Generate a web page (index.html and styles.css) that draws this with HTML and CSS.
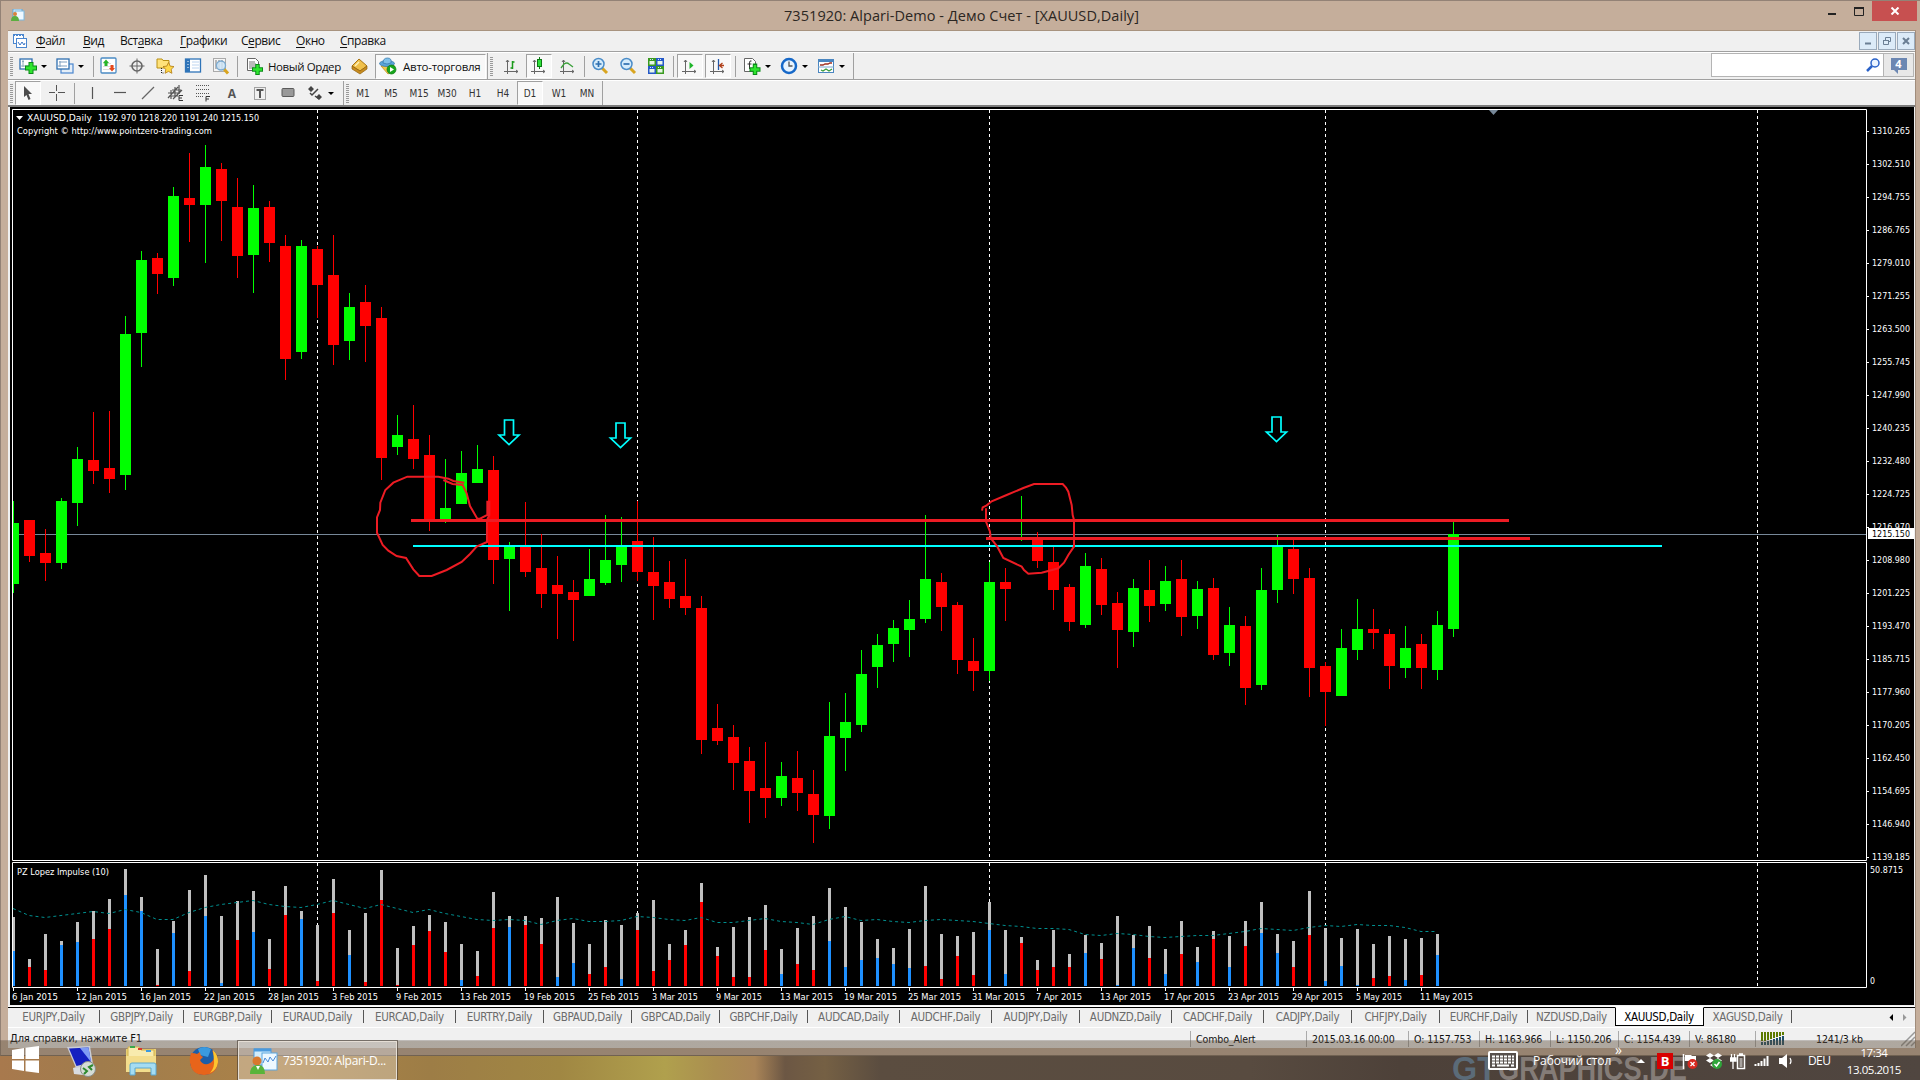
FILE: index.html
```html
<!DOCTYPE html>
<html lang="ru">
<head>
  <meta charset="UTF-8" />
  <title>7351920: Alpari-Demo - Демо Счет - [XAUUSD,Daily]</title>
  <link rel="stylesheet" href="styles.css">
</head>
<body>
  <div class="screen">
    <div class="window">
      <div class="titlebar">
        <svg class="app-icon" width="14" height="13" viewBox="0 0 14 13"><rect x="2" y="0" width="9" height="8" fill="#dff0fb" stroke="#5fa5d8"/><rect x="4" y="2" width="9" height="9" fill="#eef8ff" stroke="#7ab8e0"/><circle cx="4" cy="5" r="2" fill="#d9823a"/><path d="M0 12q0-5 4-5t4 5z" fill="#5cae3f"/></svg>
        <div class="title">7351920: Alpari-Demo - Демо Счет - [XAUUSD,Daily]</div>
        <div class="win-controls">
          <svg width="45" height="20" viewBox="0 0 45 20"><path d="M1 13h8" stroke="#222" stroke-width="2"/><path d="M27.500 7v7.500h9V7z" fill="none" stroke="#222"/><path d="M27 7h10" stroke="#222" stroke-width="2"/></svg>
          <div class="close"><svg width="10" height="8" viewBox="0 0 10 8"><path d="M1.500 .5l7 7M8.500 .5l-7 7" stroke="#fff" stroke-width="2"/></svg></div>
        </div>
      </div>

      <div class="client">
        <div class="menubar">
          <svg class="menu-icon" width="16" height="16" viewBox="0 0 16 16"><rect x="1.500" y="1.500" width="10" height="9" fill="#fff" stroke="#4a86cf"/><path d="M1 2h11" stroke="#4a86cf" stroke-width="2" stroke-dasharray="2 1"/><rect x="4.500" y="5.500" width="10" height="9" fill="#fff" stroke="#4a86cf"/><path d="M6 9l2 3 2-3 2 3 1-2" fill="none" stroke="#3a76c8"/></svg>
          <div class="menu">
            <span><u>Ф</u>айл</span><span><u>В</u>ид</span><span>Вст<u>а</u>вка</span><span><u>Г</u>рафики</span><span>С<u>е</u>рвис</span><span><u>О</u>кно</span><span><u>С</u>правка</span>
          </div>
          <div class="mdi">
            <b><svg width="8" height="8"><path d="M1 6.500h6" stroke="#6b7f94" stroke-width="2"/></svg></b>
            <b><svg width="8" height="8"><path d="M2.500 3V.5h5v4H6M.5 3.500h5v4h-5zM0 3.500h6" fill="none" stroke="#6b7f94"/></svg></b>
            <b><svg width="8" height="8"><path d="M1 1l6 6M7 1L1 7" stroke="#6b7f94" stroke-width="2"/></svg></b>
          </div>
        </div>

        <div class="toolbar">
          <div class="strip">
            <i class="grip"></i>
            <div class="drop"><svg width="18" height="18" viewBox="0 0 18 18"><rect x="1" y="2" width="12" height="10" fill="#fff" stroke="#2f6fb0" stroke-width="1.300"/><path d="M4 3v7M2 9h9M3 5l1-1 1 1" fill="none" stroke="#8ab" /><path d="M12 5v12M6 11h12" stroke="#0a8a18" stroke-width="5"/><path d="M12 6v10M7 11h10" stroke="#2ee52e" stroke-width="3"/></svg><em></em></div>
            <div class="drop"><svg width="18" height="18" viewBox="0 0 18 18"><rect x="5" y="7" width="12" height="9" fill="#e4eef8" stroke="#4a86cf" stroke-width="1.200"/><rect x="1" y="2" width="12" height="10" fill="#fff" stroke="#2f6fb0" stroke-width="1.300"/><path d="M4 4v6M2 9h9M3 5h8" stroke="#7f9fbf"/></svg><em></em></div>
            <i class="sep s4"></i>
            <div class="btn"><svg width="18" height="18" viewBox="0 0 18 18"><rect x="1" y="1" width="15" height="15" rx="1" fill="#fff" stroke="#4a8ac4" stroke-width="1.300"/><path d="M3 6.500h8M3 9.500h11M3 12.500h11" stroke="#ddd"/><path d="M6 2.500l3 3.500H7.500v3h-3V6H3z" fill="#26b52a"/><path d="M12 14.500L9 11h1.500V8h3v3H15z" fill="#e5481c"/></svg></div>
            <div class="btn"><svg width="18" height="18" viewBox="0 0 18 18"><circle cx="9" cy="9" r="5" fill="none" stroke="#666" stroke-width="1.600"/><path d="M9 1.500v15M1.500 9h15" stroke="#666"/></svg></div>
            <div class="btn"><svg width="18" height="18" viewBox="0 0 18 18"><path d="M1 2h5l1 1.500h6V11H1z" fill="#ffe27a" stroke="#b99014"/><path d="M5.500 11v5h3" fill="none" stroke="#222" stroke-dasharray="1 1"/><path d="M12.500 5.500l1.700 3.600 3.800.5-2.800 2.700.7 4-3.400-1.900-3.400 1.900.7-4L7 9.600l3.800-.5z" fill="#ffd84a" stroke="#b07a12" stroke-width=".8"/></svg></div>
            <div class="btn"><svg width="18" height="18" viewBox="0 0 18 18"><rect x="1.500" y="2" width="15" height="13" fill="#fff" stroke="#2f74b8" stroke-width="1.300"/><path d="M4 2v13" stroke="#2f74b8" stroke-width="4"/><path d="M8 5h7M8 8h7M8 11h7" stroke="#bcd4f0"/><path d="M3.500 4.500h1M3.500 7.500h1M3.500 10.500h1" stroke="#fff"/></svg></div>
            <div class="btn"><svg width="18" height="18" viewBox="0 0 18 18"><rect x="1.500" y="1.500" width="12" height="13" fill="#f6f6f6" stroke="#aaa"/><path d="M4 3v9M7 3v9M10 3v9" stroke="#777"/><path d="M12 12l4 4.500" stroke="#d9a520" stroke-width="3"/><circle cx="9" cy="8.500" r="4.500" fill="#cfe6f8" fill-opacity=".85" stroke="#7baad0" stroke-width="1.300"/></svg></div>
            <i class="sep s4"></i>
            <div class="order"><svg width="18" height="18" viewBox="0 0 18 18"><path d="M1.500 1.500h8l3 3v9h-11z" fill="#fff" stroke="#666"/><path d="M3 5h6M3 7h7M3 9h7M3 11h5" stroke="#777"/><path d="M11.500 7v11M6 12.500h11" stroke="#0a8a18" stroke-width="4.500"/><path d="M11.500 8v9M7 12.500h9" stroke="#2ee52e" stroke-width="2.500"/></svg><span>Новый Ордер</span></div>
            <div class="btn"><svg width="18" height="18" viewBox="0 0 18 18"><path d="M1 9l7-7 8 7-7 5z" fill="#f0c04a" stroke="#a87412"/><path d="M1 9v3l8 5 7-5V9l-7 5z" fill="#c98c1e" stroke="#8f6210" stroke-width=".7"/><path d="M4 9l4-4" stroke="#fff2b8" stroke-width="1.500"/></svg></div>
            <div class="auto pressed"><svg width="18" height="18" viewBox="0 0 18 18"><path d="M2 9l7 8 6-4V8z" fill="#f3c648" stroke="#b8881a" stroke-width=".7"/><ellipse cx="8" cy="6.500" rx="7.500" ry="3" fill="#5aa4d8" stroke="#2f74a8" stroke-width=".7"/><path d="M4 6q0-5 4.500-5T12 6q-4 2-8 0z" fill="#7fc0ea" stroke="#2f74a8" stroke-width=".7"/><circle cx="12.500" cy="12.500" r="4.500" fill="#18a51c" stroke="#0b7a12" stroke-width=".7"/><path d="M11 10l4 2.500-4 2.500z" fill="#fff"/></svg><span>Авто-торговля</span></div>
          </div>
          <div class="strip second">
            <i class="grip"></i>
            <div class="btn"><svg width="18" height="18" viewBox="0 0 18 18"><path d="M4.500 3v14M1 14.500h14M3 5l1.500-2L6 5M13 13l2 1.500-2 1.500" fill="none" stroke="#666"/><path d="M9.500 4v8M7.500 11h2M9.500 5h2" stroke="#1a9a1a" stroke-width="1.500"/></svg></div>
            <div class="btn pressed"><svg width="18" height="18" viewBox="0 0 18 18"><path d="M4.500 3v14M1 14.500h14M3 5l1.500-2L6 5M13 13l2 1.500-2 1.500" fill="none" stroke="#666"/><path d="M9.500 0v12" stroke="#0a7a12"/><rect x="7.500" y="2.500" width="4" height="7" fill="#2ee03a" stroke="#0a7a12"/></svg></div>
            <div class="btn"><svg width="18" height="18" viewBox="0 0 18 18"><path d="M4.500 3v14M1 14.500h14M3 5l1.500-2L6 5M13 13l2 1.500-2 1.500" fill="none" stroke="#666"/><path d="M2 11l3-4q3-2 5 0l4 3" fill="none" stroke="#3aa03a" stroke-width="1.300"/></svg></div>
            <i class="sep s4"></i>
            <div class="btn"><svg width="18" height="18" viewBox="0 0 18 18"><path d="M11 11l5 5" stroke="#d9a520" stroke-width="3"/><circle cx="7.500" cy="7" r="5.500" fill="#d5ecfb" stroke="#4a8cc8" stroke-width="1.500"/><path d="M7.500 4v6M4.500 7h6" stroke="#2f6fb0" stroke-width="1.700"/></svg></div>
            <div class="btn"><svg width="18" height="18" viewBox="0 0 18 18"><path d="M11 11l5 5" stroke="#d9a520" stroke-width="3"/><circle cx="7.500" cy="7" r="5.500" fill="#d5ecfb" stroke="#4a8cc8" stroke-width="1.500"/><path d="M4.500 7h6" stroke="#2f6fb0" stroke-width="1.700"/></svg></div>
            <div class="btn"><svg width="18" height="18" viewBox="0 0 18 18"><path d="M1 1h8v8H1zM9 9h8v8H9z" fill="#3a9a20"/><path d="M9 1h8v8H9zM1 9h8v8H1z" fill="#2458c8"/><path d="M2.500 4h5v3.500h-5zM10.500 4h5v3.500h-5zM2.500 12h5v3.500h-5zM10.500 12h5v3.500h-5z" fill="#e8f6e8"/><path d="M3 2.500h4M11 2.500h4M3 10.500h4M11 10.500h4" stroke="#cfe4ff" stroke-dasharray="1 1"/></svg></div>
            <i class="sep s7"></i>
            <div class="btn pressed"><svg width="18" height="18" viewBox="0 0 18 18"><path d="M4.500 3v14M1 14.500h14M3 5l1.500-2L6 5M13 13l2 1.500-2 1.500" fill="none" stroke="#666"/><path d="M8.500 5l4 3.500-4 3.500z" fill="#1fb52a"/></svg></div>
            <div class="btn pressed"><svg width="18" height="18" viewBox="0 0 18 18"><path d="M4.500 3v14M1 14.500h14M3 5l1.500-2L6 5M13 13l2 1.500-2 1.500" fill="none" stroke="#666"/><path d="M9.500 2v11" stroke="#2458a8" stroke-width="1.300"/><path d="M15 8.500h-4M13.500 6l-3 2.500 3 2.500" fill="none" stroke="#b0401a" stroke-width="1.300"/></svg></div>
            <i class="sep s8"></i>
            <div class="drop"><svg width="18" height="18" viewBox="0 0 18 18"><path d="M1.500 1.500h8l3 3v10h-11z" fill="#fff" stroke="#666"/><path d="M8.500 4q-2-1-2 2v6M4.500 7h4" fill="none" stroke="#333"/><path d="M12 6.500V18M6.500 12.500h11" stroke="#0a8a18" stroke-width="4.500"/><path d="M12 8v9M7.500 12.500h9" stroke="#2ee52e" stroke-width="2.500"/></svg><em></em></div>
            <div class="drop"><svg width="18" height="18" viewBox="0 0 18 18"><circle cx="9" cy="9" r="7" fill="#e8f4ff" stroke="#1668c8" stroke-width="2.500"/><path d="M9 4.500V9h3.500" fill="none" stroke="#555" stroke-width="1.300"/></svg><em></em></div>
            <div class="drop"><svg width="18" height="18" viewBox="0 0 18 18"><rect x="1.500" y="2.500" width="15" height="13" fill="#fff" stroke="#4a86c0"/><path d="M1 3.500h16" stroke="#4a86c0" stroke-width="3"/><path d="M1 10h16" stroke="#7aa8d0"/><path d="M3 8h3l2-1h3l2-1h2" fill="none" stroke="#a03020" stroke-width="1.300"/><path d="M4 13l2 1 3-2 3 2 3-2" fill="none" stroke="#3a9a3a" stroke-width="1.200"/></svg><em></em></div>
          </div>
          <div class="search">
            <div class="field"><svg width="14" height="14" viewBox="0 0 14 14"><circle cx="9" cy="5" r="4" fill="#eaf4ff" stroke="#2a62c8" stroke-width="1.500"/><path d="M6 8l-5 5" stroke="#2a62c8" stroke-width="2.500"/></svg></div>
            <div class="chat"><span>4</span></div>
          </div>
        </div>

        <div class="toolbar lower">
          <div class="strip">
            <i class="grip"></i>
            <div class="btn pressed"><svg width="18" height="18" viewBox="0 0 18 18"><path d="M5 2l8 8H9.500l2 5-2 1-2-5L5 13z" fill="#4d4d4d"/></svg></div>
            <div class="btn"><svg width="18" height="18" viewBox="0 0 18 18"><path d="M8.500 1v6M8.500 10v7M1 8.500h6M10 8.500h7" stroke="#555"/></svg></div>
            <i class="sep s7"></i>
            <div class="btn"><svg width="18" height="18"><path d="M9.500 3v12" stroke="#555" stroke-width="1.200"/></svg></div>
            <div class="btn"><svg width="18" height="18"><path d="M3 8.500h12" stroke="#555" stroke-width="1.200"/></svg></div>
            <div class="btn"><svg width="18" height="18"><path d="M3 15L15 3" stroke="#666" stroke-width="1.200"/></svg></div>
            <div class="btn"><svg width="18" height="18" viewBox="0 0 18 18"><path d="M1 14L11 3M6 15l9-9M1 9h12M3 12h8M5 6h9M4 6v9M8 3v10M12 1v9" stroke="#555" stroke-width="1.200"/><path d="M16 11.500h-4v5h4M12 14h3" fill="none" stroke="#333"/></svg></div>
            <div class="btn"><svg width="18" height="18" viewBox="0 0 18 18"><path d="M1 1.500h14M1 5.500h14M1 9.500h14M1 12.500h8" stroke="#555" stroke-dasharray="1 1"/><path d="M15 12.500h-4v5M11 15h3" fill="none" stroke="#333"/></svg></div>
            <div class="btn letter">A</div>
            <div class="btn"><svg width="18" height="18" viewBox="0 0 18 18"><rect x="3.500" y="3.500" width="11" height="12" fill="none" stroke="#555" stroke-dasharray="1 1"/><path d="M5.500 6h7M9 6v8" stroke="#555" stroke-width="2"/></svg></div>
            <div class="btn"><svg width="18" height="18"><rect x="3" y="4.500" width="12" height="8" rx="1" fill="#999" stroke="#5a5a5a"/></svg></div>
            <div class="drop"><svg width="18" height="18" viewBox="0 0 18 18"><path d="M5 2l3 3-3 3-3-3zM13 10l3 3-3 3-3-3z" fill="#444"/><path d="M4 9l2 2 6-6M9 12l4 3" fill="none" stroke="#444" stroke-width="1.500"/></svg><em></em></div>
          </div>
          <div class="strip frames">
            <i class="grip"></i>
            <div class="btn">M1</div><div class="btn">M5</div><div class="btn">M15</div><div class="btn">M30</div><div class="btn">H1</div><div class="btn">H4</div><div class="btn pressed">D1</div><div class="btn">W1</div><div class="btn">MN</div>
          </div>
        </div>

        <svg id="chart" class="chart" width="1904" height="898" viewBox="10 107 1904 898"></svg>

        <div class="tabs">
          <div class="tab-list" id="tabs"></div>
          <svg width="20" height="9" viewBox="0 0 20 9"><path d="M4 1v7L.5 4.500z" fill="#000"/><path d="M14 1v7l3.500-3.500z" fill="#999"/></svg>
        </div>

        <div class="status">
          <span class="help">Для справки, нажмите F1</span>
          <span>Combo_Alert</span>
          <span>2015.03.16 00:00</span>
          <span>O: 1157.753</span>
          <span>H: 1163.966</span>
          <span>L: 1150.206</span>
          <span>C: 1154.439</span>
          <span>V: 86180</span>
          <span class="traffic"><svg width="24" height="13" viewBox="0 0 24 13"><path d="M1 0v9M4 0v9M7 0v8M10 0v7M13 0v6M16 0v5M19 0v4M22 0v3" stroke="#5c7a00" stroke-width="2"/><path d="M1 10v3M4 10v3M7 9v4M10 8v5M13 7v6M16 6v7M19 5v8M22 4v9" stroke="#1d4f68" stroke-width="2"/></svg><span>1241/3 kb</span></span>
          <svg class="sizer" width="14" height="16" viewBox="0 0 14 16"><path d="M0 15L14 1M5 15l9-9M10 15l4-4" stroke="#999" stroke-width="1.500"/></svg>
        </div>
      </div>
    </div>

    <div class="taskbar">
      <svg class="watermark" width="240" height="24" viewBox="0 0 240 24"><text x="0" y="23.500" textLength="45" lengthAdjust="spacingAndGlyphs" fill="#5b6b78">GT</text><text x="46" y="23.500" textLength="189" lengthAdjust="spacingAndGlyphs" fill="#847c77">GRAPHICS.DE</text></svg>
      <svg class="start" width="27" height="27" viewBox="0 0 27 27"><path d="M0 4l12-2v11H0zM13.500 1.800L27 0v13H13.500zM0 14.500h12V25L0 23zM13.500 14.500H27V27l-13.500-1.800z" fill="#fff"/></svg>
      <svg class="pin" width="32" height="32" viewBox="0 0 32 32"><path d="M9 23l10-3 4 6-4 4-9-1z" fill="#d8dce0"/><path d="M3 2l23-1 3 18-17 4z" fill="#c9cdd6"/><path d="M5 3.500L24.500 2.500l2.500 15L12.500 21z" fill="#1420c0"/><path d="M16 3l8.500-.5L27 17z" fill="#7f9cf5"/><circle cx="24" cy="24" r="7.500" fill="#d5dcd6" stroke="#8a8f8a"/><path d="M19 23l4 3-3 3M29 20l-4 2 3 3" fill="none" stroke="#2e8a2e" stroke-width="2"/></svg>
      <svg class="pin" width="32" height="32" viewBox="0 0 32 32"><path d="M1 4h30v23H1z" fill="#e8cf73"/><path d="M3 2h11l2 3h13v8H3z" fill="#f8ebae" stroke="#d2b04c"/><path d="M5 2h5" stroke="#39a84a" stroke-width="2"/><path d="M13 4h4" stroke="#d93a2a" stroke-width="2"/><path d="M21 6h5" stroke="#3a9ae0" stroke-width="2"/><path d="M1 11h30v16H1z" fill="#f3dd8c"/><path d="M5 30V20q0-2 2-2h22q2 0 2 2v10h-5v-7H10v7z" fill="#a5dcf2" stroke="#5aa8d0"/></svg>
      <svg class="pin fox" width="32" height="32" viewBox="0 0 32 32"><circle cx="16" cy="16" r="14" fill="#1c5da8"/><path d="M10 4q6-4 13 0l-3 8-8-2z" fill="#3a9adf"/><path d="M3 8q4 0 6 1l3-2q0 4 3 5l-3 3q2 5 8 4 6-2 6-8l-2-6q7 5 6 13-2 12-14 12T2 18q-1-5 1-10z" fill="#e8641a"/><path d="M25 5q5 5 5 12-1 8-8 11 5-6 4-13z" fill="#fcc530"/></svg>
      <div class="task"><svg width="29" height="28" viewBox="0 0 29 28"><rect x="4" y="2" width="17" height="16" fill="#d2ecfb" stroke="#4a9ade"/><path d="M4 3h17" stroke="#4a9ade" stroke-width="3"/><rect x="12" y="6" width="15" height="17" fill="#edf8ff" stroke="#5aa6e0"/><path d="M13 16l2-5 3 4 2-5 3 4 3-5" fill="none" stroke="#4a8ad8"/><circle cx="7" cy="14" r="4.500" fill="#d9782e"/><path d="M0 27q0-9 8-9 7 0 7 9z" fill="#58b43a"/><path d="M6 19l2 4 2-4z" fill="#fff"/></svg><span>7351920: Alpari-D...</span></div>

      <div class="tray">
        <svg class="kbd" width="30" height="19" viewBox="0 0 30 19"><rect x="1" y="1" width="28" height="17" rx="1" fill="#57504c" stroke="#fff" stroke-width="2"/><path d="M4 5.500h22M4 8.500h22M4 11.500h22" stroke="#fff" stroke-width="2" stroke-dasharray="3 1"/><path d="M4 14.500h3M9 14.500h12M23 14.500h3" stroke="#fff" stroke-width="2"/></svg>
        <span class="desk">Рабочий стол</span>
        <span class="more">»</span>
        <svg class="up" width="8" height="5"><path d="M0 5l4-4 4 4z" fill="#fff"/></svg>
        <span class="red-b">B</span>
        <div class="icons">
          <svg width="16" height="18" viewBox="0 0 16 18"><path d="M1.500 2v15" stroke="#fff" stroke-width="1.500"/><path d="M3 3h6l1 1h4v6H8L7 9H3z" fill="#fff"/><circle cx="10.500" cy="12" r="5" fill="#d7281e"/><path d="M8.500 10l4 4M12.500 10l-4 4" stroke="#fff" stroke-width="1.300"/></svg>
          <svg width="16" height="18" viewBox="0 0 16 18"><path d="M4 1l4 2.500L4 6 0 3.500zM12 1l4 2.500L12 6 8 3.500zM4 6l4 2.500L4 11 0 8.500zM12 6l4 2.500L12 11 8 8.500zM8 11l4 2-4 2.500L4 13z" fill="#fff"/><circle cx="11" cy="12" r="5" fill="#2fa53a"/><path d="M8.500 12l2 2 3-4" fill="none" stroke="#fff" stroke-width="1.500"/></svg>
          <svg width="16" height="18" viewBox="0 0 16 18"><path d="M7.500 3.500h7v13h-7zM9 2h4" fill="none" stroke="#fff" stroke-width="1.500"/><path d="M9.500 6h3v9h-3z" fill="#fff" fill-opacity=".5"/><path d="M1.500 2v4M4.500 2v4M0 6h6v3H0zM3 9v8" stroke="#fff" stroke-width="1.300" fill="#fff"/></svg>
          <svg width="16" height="18" viewBox="0 0 16 18"><path d="M1.500 14v-2M4.500 14v-3M7.500 14V9M10.500 14V6.500M13.500 14V4" stroke="#fff" stroke-width="2"/></svg>
          <svg width="16" height="18" viewBox="0 0 16 18"><path d="M1 6h3l5-4v14l-5-4H1z" fill="#fff"/><path d="M12 6q2 3 0 6" fill="none" stroke="#fff" stroke-width="1.200"/></svg>
        </div>
        <span class="lang">DEU</span>
        <div class="clock"><span>17:34</span><span>13.05.2015</span></div>
      </div>
    </div>
  </div>

  <script src="chart.js"></script>
</body>
</html>
```
FILE: styles.css
```css
html, body {
  margin: 0;
  padding: 0;
  background: #fff;
  overflow: hidden;
}

body {
  font-family: "Open Sans", "Noto Sans", sans-serif;
  font-size: 12px;
  color: #111;
}

svg {
  display: block;
  flex: none;
}

span {
  white-space: nowrap;
}

.screen {
  position: relative;
  width: 1920px;
  height: 1080px;
  overflow: hidden;
}

.window {
  box-sizing: border-box;
  width: 1920px;
  height: 1056px;
  padding: 0 4px 8px 7px;
  background: #c5ae9b;
  border-top: 1px solid #938276;
  border-left: 1px solid #938276;
  border-bottom: 1px solid #7f7063;
}

/* title bar */
.titlebar {
  display: flex;
  height: 29px;
}

.app-icon {
  margin: 8px 0 0 3px;
}

.title {
  flex: 1;
  padding-left: 71px;
  text-align: center;
  font-size: 14.500px;
  line-height: 29px;
  letter-spacing: .05px;
  color: #2b2622;
}

.win-controls {
  display: flex;
  margin-right: -1px;
}

.close {
  display: flex;
  align-items: center;
  justify-content: center;
  width: 45px;
  height: 20px;
  background: #c75050;
}

.client {
  box-sizing: border-box;
  height: 1018px;
  background: #f0f0f0;
  border-top: 1px solid #a8937f;
  border-right: 1px solid #a08c7b;
}

/* menu */
.menubar {
  display: flex;
  height: 20px;
  border-bottom: 1px solid #a0a0a0;
  box-shadow: 0 1px 0 #fff;
}

.menu-icon {
  margin: 2px 0 0 4px;
}

.menu {
  display: grid;
  flex: 1;
  grid-template-columns: 47px 37px 60px 61px 55px 44px auto;
  margin-left: 8px;
  font-size: 12px;
  line-height: 20px;
  letter-spacing: -.45px;
}

.menu u {
  text-underline-offset: 2px;
}

.mdi {
  display: flex;
  gap: 1px;
  padding-top: 1px;
}

.mdi b {
  display: flex;
  box-sizing: border-box;
  align-items: center;
  justify-content: center;
  width: 18px;
  height: 18px;
  background: #dcebf8;
  border: 1px solid #9aaabb;
}

/* toolbars */
.toolbar {
  display: flex;
  height: 26px;
  padding-top: 1px;
  border-bottom: 1px solid #a0a0a0;
  box-shadow: 0 1px 0 #fff;
}

.toolbar.lower {
  height: 24px;
  border-bottom: 2px solid #7c7c7c;
  box-shadow: none;
}

.strip {
  display: flex;
  align-items: center;
  border-right: 1px solid #a0a0a0;
  padding-right: 1px;
}

.grip {
  width: 3px;
  height: 19px;
  margin: 0 4px 0 2px;
  background: repeating-linear-gradient(#999 0 1px, #f0f0f0 1px 2px);
}

.second .grip {
  margin-right: 5px;
}

.lower .grip {
  margin-right: 2px;
}

.lower .frames .grip {
  margin-right: 0;
}

.btn {
  display: flex;
  box-sizing: border-box;
  align-items: center;
  justify-content: center;
  width: 28px;
  height: 24px;
}

.pressed {
  background: #f8f8f8;
  border: 1px solid #a0a0a0;
  border-right-color: #fff;
  border-bottom-color: #fff;
}

.btn.pressed {
  width: 26px;
  margin-right: 2px;
}

.drop {
  display: flex;
  align-items: center;
  width: 35px;
  padding-left: 2px;
}

.drop em {
  margin-left: 4px;
  border: 3px solid transparent;
  border-top-color: #000;
  border-bottom: 0;
}

.lower .drop {
  width: 36px;
  padding-left: 4px;
}

.sep {
  width: 1px;
  height: 21px;
  margin: 0 1px 0 2px;
  background: #a0a0a0;
}

.sep.s7 {
  margin: 0 3px;
}

.sep.s8 {
  margin: 0 5px 0 2px;
}

.order {
  display: flex;
  align-items: center;
  width: 100px;
  padding-left: 7px;
  gap: 4px;
}

.order span, .auto span {
  font-size: 11.500px;
  letter-spacing: -.25px;
}

.order span {
  letter-spacing: -.4px;
}

.auto {
  display: flex;
  box-sizing: border-box;
  align-items: center;
  width: 111px;
  height: 25px;
  margin-left: 1px;
  padding-left: 3px;
  gap: 6px;
}

.letter {
  font-weight: bold;
  color: #555;
}

.frames {
  font-family: "DejaVu Sans Condensed", "DejaVu Sans", sans-serif;
  font-size: 10px;
  color: #333;
}

.search {
  display: flex;
  width: 203px;
  height: 24px;
  margin: 0 1px 0 auto;
}

.field, .chat {
  display: flex;
  box-sizing: border-box;
  align-items: center;
  border: 1px solid #b4b4b4;
}

.field {
  justify-content: flex-end;
  width: 173px;
  padding-right: 3px;
  background: #fff;
}

.chat {
  justify-content: center;
  width: 30px;
  border-left: 0;
  background: #e8e8e8;
}

.chat span {
  position: relative;
  width: 16px;
  height: 12px;
  margin-bottom: 3px;
  line-height: 12px;
  text-align: center;
  font-size: 11px;
  font-weight: bold;
  color: #fff;
  background: #6c87b2;
}

.chat span::after {
  content: "";
  position: absolute;
  left: 3px;
  top: 12px;
  border-top: 4px solid #6c87b2;
  border-left: 4px solid transparent;
}

/* chart */
.chart {
  margin-left: 2px;
  background: #000;
}

.chart text {
  font-family: "DejaVu Sans Condensed", "DejaVu Sans", sans-serif;
  font-size: 9px;
  fill: #fff;
}

/* chart tabs */
.tabs {
  display: flex;
  align-items: center;
  justify-content: space-between;
  height: 19px;
  margin-top: 2px;
  padding-right: 6px;
  border-top: 1px solid #000;
  border-bottom: 1px solid #fff;
  box-shadow: 0 -1px 0 #fff;
}

.tab-list {
  display: grid;
  grid-template-columns: 92px 84px 88px 92px 92px 88px 88px 88px 88px 92px 92px 88px 92px 92px 88px 88px 88px 88px 88px 88px;
  height: 19px;
  font-family: "DejaVu Sans Condensed", "DejaVu Sans", sans-serif;
  font-size: 11.500px;
  letter-spacing: -.3px;
  color: #6b6b6b;
}

.tab {
  display: flex;
  align-items: center;
  justify-content: center;
  height: 17px;
}

.tab::after {
  content: "";
  width: 1px;
  height: 13px;
  margin-left: auto;
  background: #555;
}

.tab span {
  margin-left: auto;
}

.tab.active {
  box-sizing: border-box;
  height: 19px;
  margin: -1px 0 0 -1px;
  color: #000;
  background: #fff;
  border: 1px solid #000;
  border-top-color: #fff;
}

.tab.active::after {
  background: none;
}

/* status bar */
.status {
  display: grid;
  grid-template-columns: 1182px 116px 102px 71px 71px 68px 71px 66px 1fr auto;
  align-items: center;
  height: 21px;
  font-family: "DejaVu Sans Condensed", "DejaVu Sans", sans-serif;
  font-size: 10.500px;
  letter-spacing: -.1px;
}

.status > span {
  padding-left: 5px;
  line-height: 16px;
  border-left: 1px solid #aaa;
}

.status > .help {
  padding-left: 2px;
  border: 0;
  font-size: 11px;
}

.status .traffic {
  display: flex;
  align-items: center;
  gap: 31px;
}

/* taskbar, lies over the bottom edge of the window */
.taskbar {
  position: absolute;
  left: 0;
  top: 1040px;
  display: flex;
  box-sizing: border-box;
  width: 1920px;
  height: 40px;
  padding-left: 12px;
  color: #fff;
  border-top: 1px solid rgba(80, 65, 55, .3);
  background:
    linear-gradient(90deg, #a8794d 0, #a07c4c 100px, #ac8348 300px, #9d7d46 430px, #a08743 560px, #b0a04d 665px, #aa8e50 715px, #a98457 755px, #6c5744 785px, #756044 825px, #5b4d40 880px, #584b40 1250px, #4d4139 1400px, #504640 1920px) 0 15px / 100% 24px no-repeat,
    linear-gradient(rgba(95, 80, 62, .45), rgba(95, 80, 62, .45)) 0 0 / 100% 15px no-repeat;
}

.watermark {
  position: absolute;
  left: 1452px;
  top: 15px;
}

.watermark text {
  font-family: "Liberation Sans", sans-serif;
  font-size: 33px;
  font-weight: bold;
}

.start {
  margin: 5px 25px 0 0;
}

.pin {
  margin: 4px 29px 0 0;
}

.fox {
  margin-left: 2px;
}

.task {
  display: flex;
  box-sizing: border-box;
  align-items: center;
  gap: 4px;
  width: 159px;
  height: 39px;
  margin-left: -11px;
  padding-left: 11px;
  font-size: 12px;
  letter-spacing: -.3px;
  background: rgba(255, 255, 255, .3);
  border: 1px solid #e5ded5;
  outline: 1px solid rgba(70, 60, 50, .6);
}

.tray {
  z-index: 1;
  display: flex;
  align-items: center;
  width: 432px;
  margin-left: auto;
}

.desk {
  margin-left: 15px;
  width: 82px;
  font-size: 12px;
  letter-spacing: -.1px;
}

.more {
  width: 22px;
  padding-bottom: 23px;
  font-size: 14px;
}

.red-b {
  width: 16px;
  height: 16px;
  margin: 0 9px 0 12px;
  line-height: 16px;
  text-align: center;
  font-size: 13px;
  font-weight: bold;
  background: #d80000;
}

.icons {
  display: flex;
  gap: 8px;
}

.lang {
  margin-left: 14px;
  font-size: 12px;
  letter-spacing: -.6px;
}

.clock {
  display: flex;
  flex-direction: column;
  align-items: center;
  margin: 0 19px 0 auto;
  font-size: 11.500px;
  line-height: 17px;
  letter-spacing: -.45px;
}
```
FILE: chart.js
```js
const NS = "http://www.w3.org/2000/svg";
const chart = document.getElementById("chart");

function add(tag, attrs, text) {
  const el = document.createElementNS(NS, tag);
  for (const key in attrs) el.setAttribute(key, attrs[key]);
  if (text) el.textContent = text;
  chart.appendChild(el);
  return el;
}

function rect(x, y, w, h, fill) {
  add("rect", { x: x, y: y, width: w, height: h, fill: fill });
}

function label(x, y, text, width, fill) {
  const attrs = { x: x, y: y, textLength: width, lengthAdjust: "spacingAndGlyphs" };
  if (fill) attrs.style = "fill:" + fill;
  add("text", attrs, text);
}

// direction, high, body top, body bottom, low
const candles = [
  ["u", 501, 523, 584, 593], ["d", 520, 520, 556, 562], ["d", 529, 553, 563, 581], ["u", 498, 501, 563, 569],
  ["u", 447, 459, 503, 526], ["d", 412, 460, 471, 484], ["d", 411, 468, 479, 493], ["u", 316, 334, 475, 490],
  ["u", 251, 260, 333, 367], ["d", 253, 258, 274, 294], ["u", 187, 196, 278, 286], ["d", 153, 198, 205, 242],
  ["u", 145, 167, 205, 263], ["d", 163, 169, 201, 241], ["d", 178, 207, 256, 278], ["u", 185, 208, 255, 293],
  ["d", 201, 207, 243, 262], ["d", 235, 246, 359, 380], ["u", 240, 246, 352, 359], ["d", 246, 249, 285, 318],
  ["d", 235, 275, 345, 365], ["u", 293, 307, 341, 360], ["d", 285, 302, 326, 362], ["d", 307, 318, 458, 480],
  ["u", 415, 435, 447, 455], ["d", 405, 439, 459, 469], ["d", 435, 455, 519, 531], ["u", 459, 508, 519, 523],
  ["u", 451, 473, 504, 504], ["u", 445, 469, 483, 483], ["d", 456, 470, 560, 584], ["u", 542, 546, 559, 611],
  ["d", 502, 546, 572, 577], ["d", 534, 568, 594, 608], ["d", 556, 585, 594, 639], ["d", 580, 592, 600, 641],
  ["u", 549, 579, 596, 596], ["u", 515, 560, 583, 585], ["u", 517, 546, 565, 582], ["d", 501, 541, 572, 581],
  ["d", 537, 572, 586, 620], ["d", 561, 582, 599, 608], ["d", 559, 596, 608, 615], ["d", 596, 608, 740, 754],
  ["d", 704, 728, 741, 745], ["d", 725, 737, 763, 790], ["d", 747, 761, 791, 823], ["d", 742, 788, 798, 818],
  ["u", 762, 776, 798, 806], ["d", 751, 778, 793, 811], ["d", 770, 794, 815, 843], ["u", 702, 736, 816, 829],
  ["u", 693, 722, 738, 771], ["u", 650, 674, 725, 732], ["u", 634, 645, 667, 688], ["u", 620, 628, 644, 662],
  ["u", 600, 619, 630, 657], ["u", 515, 579, 619, 623], ["d", 573, 582, 607, 631], ["d", 602, 605, 660, 674],
  ["d", 638, 661, 671, 691], ["u", 562, 582, 671, 681], ["d", 568, 582, 589, 621], ["u", 496, 538, 539, 541],
  ["d", 532, 538, 561, 568], ["d", 547, 562, 590, 610], ["d", 584, 587, 622, 631], ["u", 553, 566, 625, 628],
  ["d", 558, 569, 605, 615], ["d", 592, 603, 630, 668], ["u", 579, 588, 632, 647], ["d", 560, 590, 606, 622],
  ["u", 566, 581, 604, 611], ["d", 560, 579, 617, 636], ["u", 581, 589, 616, 629], ["d", 578, 588, 655, 660],
  ["u", 607, 625, 653, 666], ["d", 616, 626, 688, 705], ["u", 568, 590, 685, 690], ["u", 535, 546, 590, 603],
  ["d", 540, 549, 579, 594], ["d", 568, 578, 668, 697], ["d", 662, 666, 692, 726], ["u", 629, 648, 696, 696],
  ["u", 599, 629, 650, 660], ["d", 609, 629, 633, 649], ["d", 629, 634, 666, 689], ["u", 626, 648, 668, 678],
  ["d", 634, 644, 668, 689], ["u", 611, 625, 670, 680], ["u", 522, 534, 629, 637]
];

// colour, grey top, coloured top, dashed average
const impulse = [
  ["b", 917, 951, 909], ["r", 959, 967, 916], ["r", 934, 970, 918], ["b", 941, 945, 916], ["b", 922, 942, 914],
  ["r", 911, 939, 912], ["r", 899, 929, 914], ["b", 869, 895, 910], ["b", 897, 911, 913], ["r", 949, 985, 920],
  ["b", 921, 933, 920], ["r", 890, 971, 913], ["b", 875, 916, 908], ["b", 916, 983, 905], ["r", 901, 940, 903],
  ["b", 891, 932, 901], ["r", 939, 969, 905], ["r", 886, 915, 907], ["b", 911, 919, 908], ["r", 925, 981, 905],
  ["r", 879, 913, 901], ["b", 930, 955, 905], ["r", 913, 982, 909], ["r", 870, 900, 905], ["r", 948, 985, 909],
  ["r", 926, 945, 913], ["r", 915, 931, 910], ["r", 922, 952, 914], ["b", 944, 980, 917], ["r", 951, 976, 920],
  ["r", 892, 928, 921], ["b", 916, 927, 920], ["r", 916, 925, 921], ["r", 918, 944, 925], ["b", 897, 977, 921],
  ["b", 923, 963, 919], ["r", 944, 974, 922], ["r", 920, 967, 922], ["b", 925, 979, 921], ["r", 913, 930, 917],
  ["r", 900, 971, 918], ["r", 944, 960, 920], ["r", 930, 945, 921], ["r", 883, 902, 918], ["r", 947, 956, 923],
  ["r", 927, 977, 923], ["r", 917, 977, 921], ["r", 905, 950, 919], ["b", 949, 974, 922], ["r", 928, 964, 923],
  ["r", 916, 970, 925], ["b", 888, 941, 920], ["b", 907, 967, 917], ["b", 922, 960, 921], ["b", 939, 958, 920],
  ["b", 948, 964, 922], ["b", 929, 968, 923], ["r", 886, 966, 921], ["r", 934, 979, 920], ["r", 936, 956, 921],
  ["r", 932, 975, 922], ["b", 902, 930, 924], ["b", 930, 974, 926], ["r", 937, 943, 927], ["r", 960, 970, 929],
  ["r", 930, 967, 929], ["r", 954, 967, 930], ["b", 935, 953, 935], ["r", 943, 959, 936], ["b", 916, 985, 934],
  ["b", 935, 948, 935], ["r", 926, 958, 937], ["b", 949, 974, 938], ["r", 921, 954, 937], ["b", 947, 962, 936],
  ["r", 931, 939, 936], ["b", 936, 967, 934], ["r", 921, 946, 932], ["b", 902, 933, 929], ["b", 934, 953, 930],
  ["r", 941, 967, 931], ["r", 891, 935, 928], ["b", 928, 981, 926], ["b", 938, 966, 927], ["b", 929, 985, 925],
  ["r", 944, 978, 926], ["r", 936, 976, 926], ["b", 939, 980, 928], ["r", 938, 975, 932], ["b", 934, 955, 932]
];

const dates = ["6 Jan", "12 Jan", "16 Jan", "22 Jan", "28 Jan", "3 Feb", "9 Feb", "13 Feb", "19 Feb", "25 Feb",
  "3 Mar", "9 Mar", "13 Mar", "19 Mar", "25 Mar", "31 Mar", "7 Apr", "13 Apr", "17 Apr", "23 Apr", "29 Apr",
  "5 May", "11 May"];

const prices = ["1310.265", "1302.510", "1294.755", "1286.765", "1279.010", "1271.255", "1263.500", "1255.745",
  "1247.990", "1240.235", "1232.480", "1224.725", "1216.970", "1208.980", "1201.225", "1193.470", "1185.715",
  "1177.960", "1170.205", "1162.450", "1154.695", "1146.940", "1139.185"];

// period separators
[317, 637, 989, 1325, 1757].forEach(x => {
  add("path", { d: `M${x}.5 110V860M${x}.5 863V987`, stroke: "#fff", "stroke-dasharray": "3 3" });
});

// current price
rect(13, 534, 1853, 1, "#778899");

candles.forEach((c, i) => {
  const x = 13 + i * 16;
  const color = c[0] === "u" ? "#00ff00" : "#ff0000";
  rect(x, c[1], 1, c[4] - c[1], color);
  const left = Math.max(x - 5, 13);
  rect(left, c[2], x + 6 - left, c[3] - c[2], color);
});

impulse.forEach((v, i) => {
  const x = 13 + i * 16;
  const left = Math.max(x - 1, 13);
  rect(left, v[1], x + 2 - left, v[2] - v[1], "#c0c0c0");
  rect(left, v[2], x + 2 - left, 986 - v[2], v[0] === "b" ? "#1e90ff" : "#ff0000");
});

add("polyline", {
  points: impulse.map((v, i) => `${13 + i * 16},${v[3] - 0.5}`).join(" "),
  fill: "none", stroke: "#008f8f", "stroke-dasharray": "3 3"
});

// levels
rect(413, 545, 1249, 2, "#00ffff");
rect(411, 519, 1098, 3, "#ed1c24");
rect(986, 537, 544, 3, "#ed1c24");

// freehand marks
const pen = { fill: "none", stroke: "#ed1c24", "stroke-width": 6 };
add("path", Object.assign({
  transform: "translate(0 130) scale(.33333)",
  d: "M1330 1050L1358 1062L1388 1065L1400 1090L1410 1128L1432 1166L1440 1166L1462 1155V1115H1468V1155L1461 1170V1236L1430 1250L1410 1272L1385 1296L1340 1320L1295 1338H1258L1240 1318L1218 1284L1190 1278L1165 1262L1148 1245L1131 1208V1162L1140 1140L1141 1118L1156 1080L1180 1058L1222 1040H1315L1345 1046L1360 1053L1393 1058"
}, pen));
add("path", Object.assign({
  transform: "translate(960 400) scale(.33333)",
  d: "M66 332L68 322L80 316L95 304L140 285L190 264L222 252H308L318 263L325 275L335 315L338 345L342 360V440L325 465L312 488L295 505L245 518L205 521L192 510L185 500L130 474L112 440L92 414L90 395L78 365V325"
}, pen));

[[509, 419], [620.5, 422], [1276.5, 416]].forEach(p => {
  add("path", {
    transform: `translate(${p[0]} ${p[1]})`,
    d: "M-4.500 1H4.500V16H10L0 25.500L-10 16H-4.500Z",
    fill: "none", stroke: "#00ffff", "stroke-width": 1.700
  });
});

// frames
add("path", { d: "M12.500 109.500H1866.500V860.500H12.500ZM12.500 862.500H1866.500V987.500H12.500Z", fill: "none", stroke: "#fff" });
add("path", { d: "M1489 110h9l-4.500 5z", fill: "#778899" });
add("path", { d: "M16 116h7l-3.500 4z", fill: "#fff" });

label(27, 121, "XAUUSD,Daily", 65);
label(98, 121, "1192.970 1218.220 1191.240 1215.150", 161);
label(17, 134, "Copyright © http://www.pointzero-trading.com", 195);
label(17, 875, "PZ Lopez Impulse (10)", 92);

prices.forEach((p, i) => {
  const y = 131 + i * 33;
  rect(1867, y, 2, 1, "#fff");
  label(1872, y + 3, p, 38);
});
rect(1868, 528, 46, 11, "#fff");
label(1872, 537, "1215.150", 38, "#000");

label(1870, 873, "50.8715", 33);
label(1870, 984, "0", 5);

dates.forEach((d, i) => {
  rect(13 + i * 64, 988, 1, 3, "#fff");
  label(12 + i * 64, 1000, d + " 2015", /^\d /.test(d) ? 46 : (/May|Mar/.test(d) ? 53 : 51));
});

const symbols = ["EURJPY", "GBPJPY", "EURGBP", "EURAUD", "EURCAD", "EURTRY", "GBPAUD", "GBPCAD", "GBPCHF", "AUDCAD",
  "AUDCHF", "AUDJPY", "AUDNZD", "CADCHF", "CADJPY", "CHFJPY", "EURCHF", "NZDUSD", "XAUUSD", "XAGUSD"];
const tabs = document.getElementById("tabs");
symbols.forEach(s => {
  const tab = document.createElement("div");
  tab.className = s === "XAUUSD" ? "tab active" : "tab";
  const name = document.createElement("span");
  name.textContent = s + ",Daily";
  tab.appendChild(name);
  tabs.appendChild(tab);
});
```
